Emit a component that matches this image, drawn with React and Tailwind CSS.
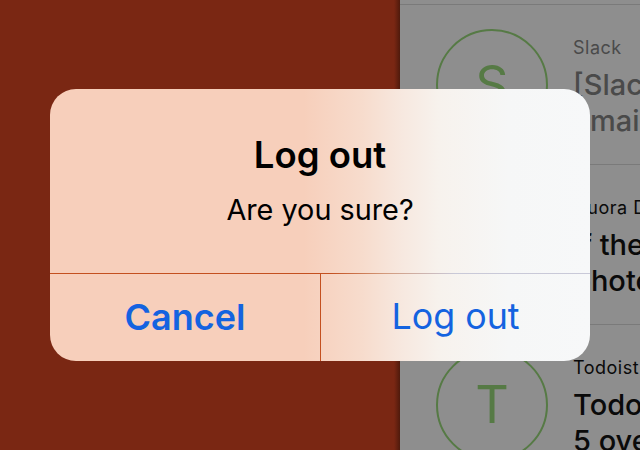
const rows = [
  { app: "Slack", letter: "S", lines: ["[Slack] Please confirm", "email address"], muted: true },
  { app: "Quora Digest", letter: "Q", lines: ["If the", "photo real?"], muted: false },
  { app: "Todoist", letter: "T", lines: ["Todoist Daily", "5 overdue tasks"], muted: false },
];

const Row = ({ app, letter, lines, muted }) => (
  <div className="h-[160px] shrink-0 flex border-b border-[#7a7a7a] pl-[36px] pt-[24px] overflow-hidden">
    <div className="w-[112px] h-[112px] shrink-0 rounded-full border-2 border-[#567a45] flex items-center justify-center text-[#567a45] text-[52px] leading-none">
      {letter}
    </div>
    <div className="ml-[25px] whitespace-nowrap">
      <div className={`text-[18px] leading-[24px] tracking-[0.5px] mt-[7px] ${muted ? "text-[#4a4a4a]" : "text-[#0a0a0a]"}`}>{app}</div>
      <div className={`text-[29px] leading-[36px] font-[450] mt-[7px] ${muted ? "text-[#4a4a4a]" : "text-[#0a0a0a]"}`}>
        {lines.map((l) => <div key={l}>{l}</div>)}
      </div>
    </div>
  </div>
);

export default function App() {
  return (
    <div className="relative w-[640px] h-[450px] overflow-hidden flex font-['Inter',sans-serif]">
      <div className="w-[400px] shrink-0 bg-[#7a2713] relative">
        <div className="absolute right-0 top-0 bottom-0 w-[6px] bg-gradient-to-r from-transparent to-[#4f1a0c]" />
      </div>
      <div className="flex-1 bg-[#8e8e8e] overflow-hidden flex flex-col">
        <div className="h-[5px] shrink-0 border-b border-[#7a7a7a]" />
        {rows.map((r) => <Row key={r.app} {...r} />)}
      </div>

      <div className="absolute left-[50px] top-[89px] w-[540px] h-[272px] rounded-[26px] overflow-hidden flex flex-col bg-[linear-gradient(to_right,#f7cfbb_0%,#f7cfbb_47%,#f7dccd_58%,#f7e8df_65%,#f7f2ed_72%,#f6f7f7_85%,#f7f8f9_100%)]">
        <div className="h-[184px] shrink-0 flex flex-col items-center">
          <div className="text-[36.5px] leading-[44px] font-semibold text-black mt-[44px]">Log out</div>
          <div className="text-[28.8px] leading-[36px] text-black mt-[15px]">Are you sure?</div>
        </div>
        <div className="h-px shrink-0 bg-[linear-gradient(to_right,#c4501f_0%,#c4501f_52%,#d39a7c_62%,#c9c9d8_75%,#c9c9d8_100%)]" />
        <div className="flex-1 flex">
          <div className="w-[270px] flex items-center justify-center text-[36px] font-semibold text-[#1463e0] pb-[2px]">Cancel</div>
          <div className="w-px bg-[#c4501f]" />
          <div className="flex-1 flex items-center justify-center text-[35.8px] text-[#1463e0] pb-[2px]">Log out</div>
        </div>
      </div>
    </div>
  );
}
